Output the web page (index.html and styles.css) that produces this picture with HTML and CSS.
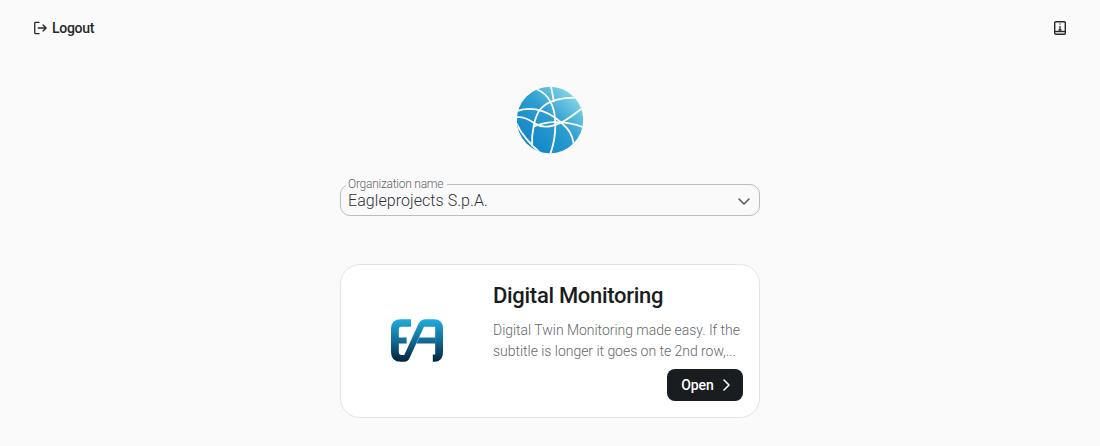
FILE: index.html
```html
<!DOCTYPE html>
<html lang="en">
<head>
<meta charset="utf-8">
<title>Digital Monitoring</title>
<link rel="stylesheet" href="styles.css">
</head>
<body>
<header class="topbar">
  <button class="logout" type="button">
    <svg class="logout-icon" viewBox="0 0 16 16" fill="none" stroke="currentColor" stroke-width="1.5" stroke-linecap="round" stroke-linejoin="round"><path d="M7 1.500H3a1 1 0 0 0-1 1v11a1 1 0 0 0 1 1h4"/><path d="M6 8H15M11.500 4.500 15 8 11.500 11.500"/></svg>
    <span>Logout</span>
  </button>
  <button class="manual" type="button" aria-label="Manual">
    <svg viewBox="0 0 12 14" width="12" height="14" fill="none" stroke="currentColor" stroke-width="1.4"><path d="M2 .7h8.300a1 1 0 0 1 1 1v10.600a1 1 0 0 1-1 1H2a1.300 1.300 0 0 1-1.300-1.300V2A1.300 1.300 0 0 1 2 .7Z"/><path d="M1 10.500h10.500"/><path d="M6 5v4M4.500 9h3" stroke-width="1.300"/><path d="M6 2.600v1" stroke-width="1.500"/></svg>
  </button>
</header>

<main class="content">
  <svg class="globe" viewBox="35 33 198 205" aria-label="Globe logo">
    <defs>
      <linearGradient id="globeFill" x1="0.1" y1="0.95" x2="0.9" y2="0.1">
        <stop offset="0" stop-color="#0c82c5"/>
        <stop offset="0.55" stop-color="#2c9dd1"/>
        <stop offset="1" stop-color="#8bdae8"/>
      </linearGradient>
      <clipPath id="globeClip"><circle cx="134" cy="135.500" r="100"/></clipPath>
    </defs>
    <circle cx="134" cy="135.500" r="100" fill="url(#globeFill)"/>
    <g clip-path="url(#globeClip)" fill="none" stroke="#fafafa" stroke-width="5.500">
      <path d="M92 42C128 56 150 90 150 150C150 185 145 212 134 240"/>
      <path d="M136 30C140 48 143 62 146 82"/>
      <path d="M30 110C85 88 140 112 185 160C198 175 206 195 206 222"/>
      <path d="M222 68C165 66 125 78 104 104C88 126 78 170 80 215"/>
      <path d="M30 128C52 122 72 136 92 148C120 165 160 150 190 130C205 120 220 108 236 96"/>
      <path d="M31 142C45 175 70 205 105 235"/>
      <path d="M84 156C120 138 180 136 236 158"/>
    </g>
  </svg>

  <fieldset class="select-field">
    <legend class="select-label">Organization name</legend>
    <div class="select-row">
      <span class="select-value">Eagleprojects S.p.A.</span>
      <svg class="chevron-down" viewBox="0 0 12 7" fill="none" stroke="currentColor" stroke-width="1.500" stroke-linecap="round" stroke-linejoin="round"><path d="M1 1 6 6 11 1"/></svg>
    </div>
  </fieldset>

  <article class="card">
    <div class="card-logo">
      <svg viewBox="47 42 153 125" width="52" height="43" aria-label="EA logo">
        <defs>
          <linearGradient id="eaFill" gradientUnits="userSpaceOnUse" x1="0" y1="42" x2="0" y2="167">
            <stop offset="0" stop-color="#20addd"/>
            <stop offset="0.5" stop-color="#126c98"/>
            <stop offset="1" stop-color="#03213c"/>
          </linearGradient>
        </defs>
        <path fill="url(#eaFill)" d="M106 42H76Q47 42 47 71V138Q47 167 76 167H86Q97 167 102 155L144 64H177V146H170V167H174Q200 167 200 139V70Q200 42 174 42H150Q135 42 128 55L86 147H76Q70 147 70 139V113H93V96H70V72Q70 64 78 64H106Z"/>
        <path fill="url(#eaFill)" d="M130 96H178V113H122Z"/>
      </svg>
    </div>
    <div class="card-body">
      <h2 class="card-title">Digital Monitoring</h2>
      <p class="card-text">Digital Twin Monitoring made easy. If the subtitle is longer it goes on te 2nd row,...</p>
      <div class="card-actions">
        <button class="open" type="button">
          <span>Open</span>
          <svg viewBox="0 0 7 12" width="7" height="12" fill="none" stroke="currentColor" stroke-width="1.500" stroke-linecap="round" stroke-linejoin="round"><path d="M1 1 6 6 1 11"/></svg>
        </button>
      </div>
    </div>
  </article>
</main>
</body>
</html>
```
FILE: styles.css
```css
* { box-sizing: border-box; }
html, body { height: 100%; }
body {
  margin: 0;
  background: #fafafa;
  color: #1a1d20;
  font-family: "Roboto", "Noto Sans", sans-serif;
  overflow: hidden;
}
button { font: inherit; color: inherit; background: none; border: 0; padding: 0; }

.topbar {
  display: flex;
  justify-content: space-between;
  align-items: center;
  height: 56px;
  padding: 0 34px 0 33px;
}
.logout {
  display: flex;
  align-items: center;
  gap: 5px;
  font-size: 14px;
  font-weight: 500;
  letter-spacing: -0.3px;
  color: #25282b;
}
.logout-icon { width: 14px; height: 14px; }
.manual { display: flex; color: #25282b; }

.content {
  display: flex;
  flex-direction: column;
  align-items: center;
  padding-top: 30px;
}
.globe { width: 66px; height: 68px; }

.select-field {
  width: 420px;
  height: 38px;
  margin: 24px 0 0;
  padding: 0 7px;
  border: 1px solid #bdbdbd;
  border-radius: 10px;
  min-width: 0;
}
.select-label {
  padding: 0 4px 0 2px;
  margin-left: -2px;
  font-size: 12px;
  line-height: 12px;
  font-weight: 300;
  letter-spacing: -0.25px;
  color: #666;
}
.select-row {
  display: flex;
  justify-content: space-between;
  align-items: center;
  padding: 1px 2px 0 0;
}
.select-value { font-size: 16px; line-height: 20px; font-weight: 300; letter-spacing: 0.06px; color: #303336; }
.chevron-down { width: 12px; height: 7px; color: #55585b; }

.card {
  display: flex;
  width: 420px;
  height: 154px;
  margin-top: 48px;
  background: #fff;
  border: 1px solid #e4e4e4;
  border-radius: 20px;
}
.card-logo {
  display: flex;
  align-items: center;
  width: 152px;
  padding: 0 0 2px 50px;
}
.card-body {
  display: flex;
  flex-direction: column;
  flex: 1;
  padding: 17px 16px 16px 0;
}
.card-title { margin: 0; font-size: 22px; line-height: 28px; font-weight: 500; letter-spacing: -0.3px; }
.card-text {
  margin: 10px 0 0;
  font-size: 14px;
  line-height: 21px;
  font-weight: 300;
  letter-spacing: -0.03px;
  color: #66686a;
}
.card-actions { display: flex; justify-content: flex-end; margin-top: auto; }
.open {
  display: flex;
  align-items: center;
  justify-content: center;
  gap: 9px;
  width: 76px;
  height: 32px;
  padding-left: 1px;
  border-radius: 8px;
  background: #1a1d20;
  color: #fff;
  font-size: 14px;
  font-weight: 500;
  letter-spacing: -0.1px;
}
```
